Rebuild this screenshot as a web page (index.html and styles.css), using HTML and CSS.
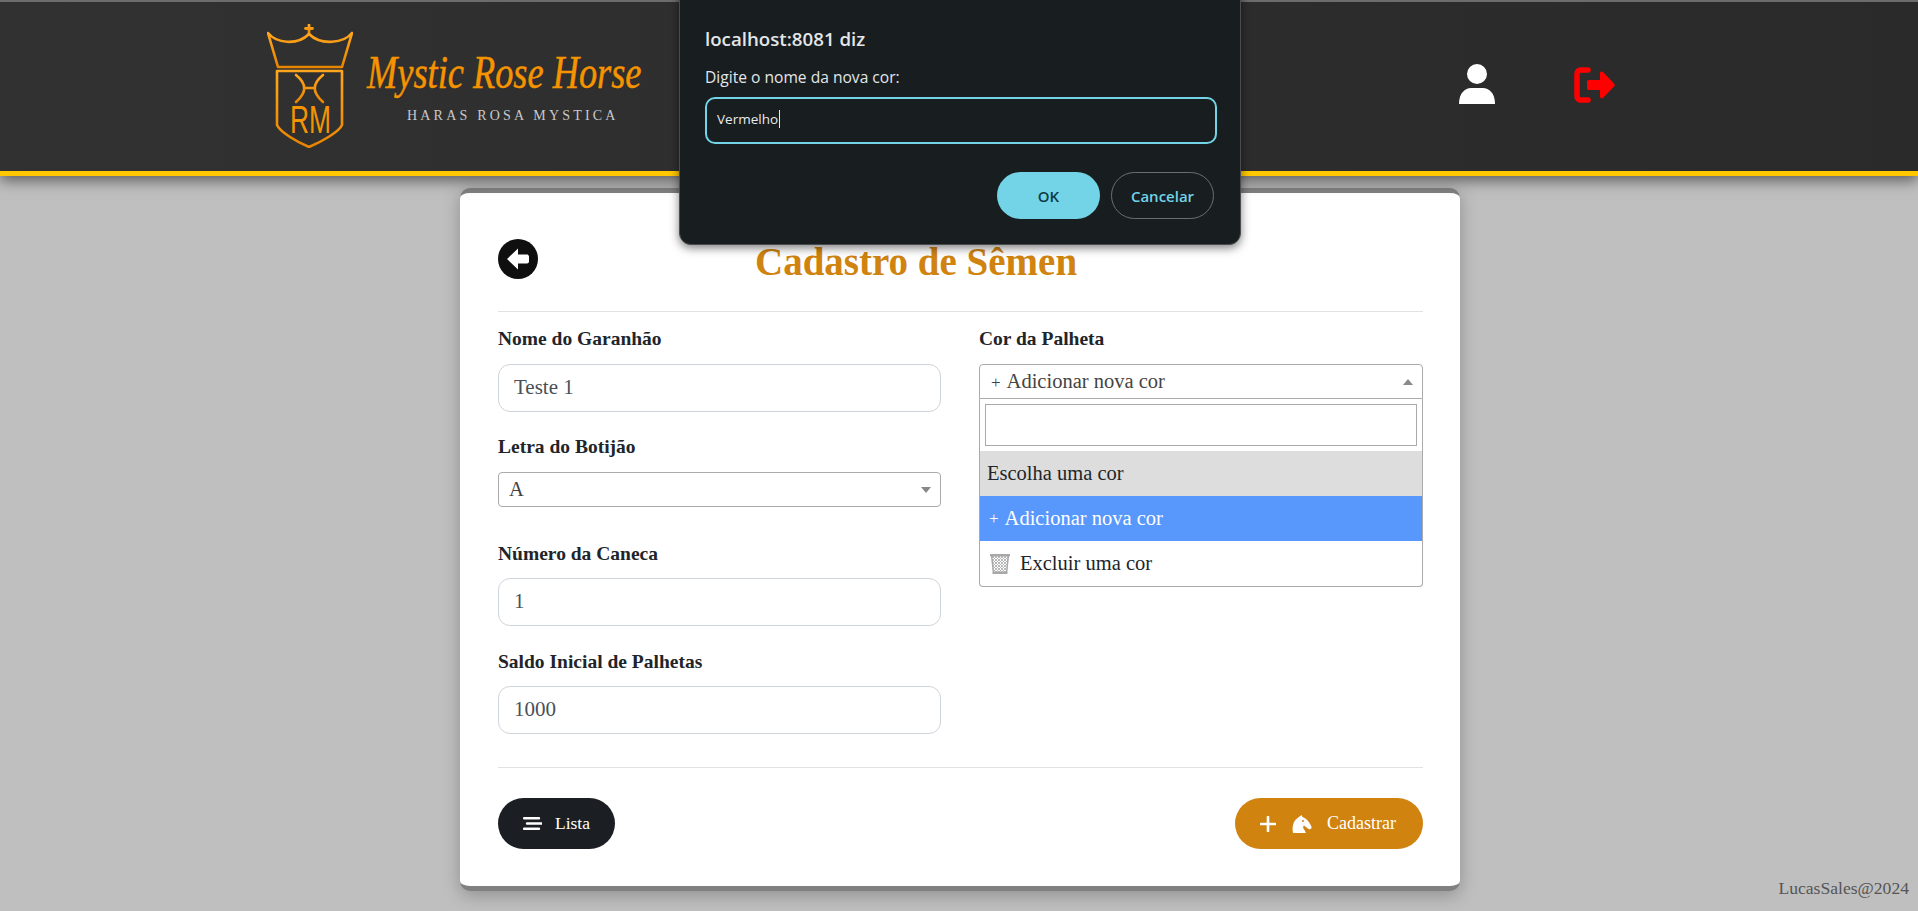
FILE: index.html
```html
<!DOCTYPE html>
<html lang="pt-BR">
<head>
<meta charset="utf-8">
<title>Cadastro de Sêmen</title>
<link rel="stylesheet" href="styles.css">
</head>
<body>
<header class="topbar">
  <div class="brand">
    <svg class="crest" viewBox="0 0 86 124" width="86" height="124" aria-hidden="true">
      <defs>
        <linearGradient id="gold" x1="0" y1="0" x2="0" y2="1">
          <stop offset="0" stop-color="#ffa51e"/><stop offset="1" stop-color="#e88500"/>
        </linearGradient>
      </defs>
      <g fill="none" stroke="url(#gold)" stroke-width="2.600" stroke-linecap="round" stroke-linejoin="round">
        <path d="M42 1V10M38.500 4.500H45.500" stroke-width="2.800"/>
        <path d="M1 9C9 19 30 22 42 10C54 22 77 19 85 9L75 43H11Z"/>
        <path d="M10 47H75V101C72 108 54 118 42 123C30 118 13 108 10 101Z"/>
        <path d="M29 51C40 60 40 68 29 78M56 51C45 60 45 68 56 78M37 64H48"/>
      </g>
      <text class="crest-rm" x="23" y="109" textLength="41" lengthAdjust="spacingAndGlyphs">RM</text>
    </svg>
    <div class="brand-text">
      <span class="brand-name">Mystic Rose Horse</span>
      <span class="brand-sub">HARAS ROSA MYSTICA</span>
    </div>
  </div>
  <nav class="top-actions">
    <svg class="user-icon" viewBox="0 0 36 40" width="36" height="40" aria-hidden="true">
      <circle cx="18" cy="10" r="10" fill="#fff"/>
      <path d="M0 40C0 29 6 24 12 24H24C30 24 36 29 36 40Z" fill="#fff"/>
    </svg>
    <svg class="exit-icon" viewBox="0 0 41 36" width="41" height="36" aria-hidden="true">
      <path d="M14 3H7C4.500 3 3 4.500 3 7V29C3 31.500 4.500 33 7 33H14" fill="none" stroke="#f00" stroke-width="5.500" stroke-linecap="round"/>
      <path d="M15 13H26V6C26 5 27.500 4 29 5L40 16.500C41 17.500 41 18.500 40 19.500L29 31C27.500 32 26 31 26 30V23H15C13.500 23 13 22 13 21V15C13 14 13.500 13 15 13Z" fill="#f00"/>
    </svg>
  </nav>
</header>

<main class="card">
  <div class="card-head">
    <button class="back" type="button" aria-label="Voltar">
      <svg viewBox="0 0 40 40" width="40" height="40" aria-hidden="true">
        <circle cx="20" cy="20" r="20" fill="#0f0f0f"/>
        <path d="M9 20L20 9.500V15.500H29C30 15.500 31 16.500 31 17.500V22.500C31 23.500 30 24.500 29 24.500H20V30.500Z" fill="#fff"/>
      </svg>
    </button>
    <h1 class="title">Cadastro de Sêmen</h1>
  </div>
  <div class="rule"></div>
  <form class="form-grid">
    <div class="col">
      <div class="field">
        <label class="label">Nome do Garanhão</label>
        <input class="input" type="text" value="Teste 1">
      </div>
      <div class="field field-select">
        <label class="label">Letra do Botijão</label>
        <div class="select">
          <span class="select-value">A</span>
          <span class="caret caret-down"></span>
        </div>
      </div>
      <div class="field field-low">
        <label class="label">Número da Caneca</label>
        <input class="input" type="text" value="1">
      </div>
      <div class="field field-low field-last">
        <label class="label">Saldo Inicial de Palhetas</label>
        <input class="input" type="text" value="1000">
      </div>
    </div>
    <div class="col">
      <div class="field">
        <label class="label">Cor da Palheta</label>
        <div class="combo">
          <div class="select select-open">
            <span class="select-value"><span class="plus plus-top">+</span>Adicionar nova cor</span>
            <span class="caret caret-up"></span>
          </div>
          <div class="search-wrap"><input class="search" type="text" aria-label="Buscar"></div>
          <ul class="options">
            <li class="option option-muted">Escolha uma cor</li>
            <li class="option option-active"><span class="plus">+</span>Adicionar nova cor</li>
            <li class="option">
              <svg class="trash" viewBox="0 0 20 20" width="20" height="20" aria-hidden="true">
                <defs>
                  <pattern id="mesh" width="3" height="3" patternUnits="userSpaceOnUse">
                    <path d="M0 0L3 3M3 0L0 3" stroke="#b0b0b0" stroke-width=".9"/>
                  </pattern>
                </defs>
                <path d="M1 1H19L17 19H3Z" fill="url(#mesh)"/>
                <path d="M0 0H20V2.500H0ZM1 2.500H2.500L4 18H2.700ZM17.500 2.500H19L17.300 18H16ZM2.500 17.500H17.500V20H2.500Z" fill="#a8a8a8"/>
              </svg>
              <span>Excluir uma cor</span>
            </li>
          </ul>
        </div>
      </div>
    </div>
  </form>
  <div class="rule"></div>
  <div class="actions">
    <button class="btn btn-dark" type="button">
      <svg viewBox="0 0 19 13" width="19" height="13" aria-hidden="true">
        <path d="M1 1.200H16M4 6.500H19M1 11.800H16" stroke="#fff" stroke-width="2.400" stroke-linecap="round"/>
      </svg>
      Lista
    </button>
    <button class="btn btn-orange" type="button">
      <svg viewBox="0 0 16 16" width="16" height="16" aria-hidden="true">
        <path d="M8 1V15M1 8H15" stroke="#fff" stroke-width="2.600" stroke-linecap="round"/>
      </svg>
      <svg class="horse" viewBox="0 0 20 18" width="20" height="18" aria-hidden="true">
        <path d="M1 18C0 12 1 6.500 5 3.500L9.500 0L10.500 2C14 3 17 6.500 19.500 11.500C20 13.500 18.500 15 16.500 14L12 10.500C10.500 11.500 11 13.500 12.500 15L14 18Z" fill="#fff"/>
        <circle cx="11" cy="6" r="1" fill="#d0840f"/>
      </svg>
      <span class="btn-text">Cadastrar</span>
    </button>
  </div>
</main>

<footer class="credit">LucasSales@2024</footer>

<div class="dialog" role="dialog">
  <div class="dialog-title">localhost:8081 diz</div>
  <div class="dialog-msg">Digite o nome da nova cor:</div>
  <div class="dialog-input">Vermelho<span class="cursor"></span></div>
  <div class="dialog-actions">
    <button class="dlg-btn dlg-ok" type="button">OK</button>
    <button class="dlg-btn dlg-cancel" type="button">Cancelar</button>
  </div>
</div>
</body>
</html>
```

FILE: styles.css
```css
* { box-sizing: border-box; }
html, body { margin: 0; height: 100%; }
body {
  background: #bfbfbf;
  font-family: "Liberation Serif", serif;
  color: #212529;
  overflow: hidden;
  position: relative;
}

/* header */
.topbar {
  height: 176px;
  border-top: 2px solid #6c6c6c;
  border-bottom: 5px solid #ffc800;
  background: linear-gradient(90deg, #313131, #2a2a2a);
  box-shadow: 0 4px 14px rgba(0, 0, 0, .55);
  display: flex;
  align-items: flex-start;
  position: relative;
  padding-left: 267px;
}
.brand { display: flex; padding-top: 22px; }
.crest { display: block; }
.crest-rm { font: 38px "Liberation Sans", sans-serif; fill: #f59400; }
.brand-text { display: flex; flex-direction: column; margin-left: 14px; padding-top: 22px; }
.brand-name {
  font: italic 46px/54px "Liberation Serif", serif;
  color: #f59400;
  -webkit-text-stroke: .5px #f59400;
  white-space: nowrap;
  width: 276px;
  transform: scaleX(.79);
  transform-origin: left center;
}
.brand-sub {
  font-size: 14px;
  line-height: 16px;
  color: #c9c9c9;
  letter-spacing: 3.200px;
  margin: 8px 0 0 40px;
  white-space: nowrap;
}
.top-actions { display: flex; align-items: flex-start; margin-left: 816px; padding-top: 62px; }
.exit-icon { margin-left: 79px; margin-top: 3px; }

/* card */
.card {
  width: 1000px;
  height: 703px;
  margin: 12px 0 0 460px;
  background: #fff;
  border-top: 5px solid #808080;
  border-bottom: 5px solid #808080;
  border-radius: 10px;
  padding: 46px 37px 0 38px;
  box-shadow: 0 4px 18px rgba(0, 0, 0, .25);
}
.card-head { display: flex; height: 40px; margin-bottom: 32px; }
.back { border: 0; background: none; padding: 0; height: 40px; width: 40px; }
.title {
  margin: 0 0 0 217px;
  font-size: 39px;
  line-height: 46px;
  font-weight: 700;
  color: #d0840f;
  white-space: nowrap;
}
.rule { height: 1px; background: #e2e2e2; }

/* form */
.form-grid {
  display: grid;
  grid-template-columns: 443px 444px;
  column-gap: 38px;
  padding-top: 15px;
  height: 455px;
}
.field { margin-bottom: 23px; }
.field-select { margin-bottom: 34px; }
.field-last { margin-bottom: 0; }
.label {
  display: block;
  font-size: 19.500px;
  line-height: 24px;
  font-weight: 700;
  color: #212529;
  margin-bottom: 13px;
}
.field-low .label { padding-top: 1px; line-height: 23px; }
.input {
  display: block;
  width: 100%;
  height: 48px;
  border: 1px solid #ced4da;
  border-radius: 12px;
  padding: 0 15px 2px;
  background: #fff;
  font: 21px "Liberation Serif", serif;
  color: #495057;
}
.select {
  height: 35px;
  border: 1px solid #aaa;
  border-radius: 4px;
  display: flex;
  align-items: center;
  justify-content: space-between;
  padding: 0 9px 0 10px;
  background: #fff;
}
.select-value { font-size: 20.500px; color: #444; white-space: nowrap; }
.caret { width: 0; height: 0; border-left: 5px solid transparent; border-right: 5px solid transparent; }
.caret-down { border-top: 6px solid #888; }
.caret-up { border-bottom: 6px solid #888; }
.select-open { border-radius: 4px 4px 0 0; }
.search-wrap {
  border-left: 1px solid #aaa;
  border-right: 1px solid #aaa;
  padding: 5px;
  background: #fff;
}
.search { display: block; width: 100%; height: 42px; border: 1px solid #aaa; background: #fff; }
.options {
  list-style: none;
  margin: 0;
  padding: 0;
  border: 1px solid #aaa;
  border-top: 0;
  border-radius: 0 0 4px 4px;
  background: #fff;
  overflow: hidden;
}
.option {
  height: 45px;
  padding: 0 7px;
  display: flex;
  align-items: center;
  font-size: 20.500px;
  color: #212529;
  white-space: nowrap;
}
.option-muted { background: #ddd; }
.option-active { background: #5897fb; color: #fff; }
.plus { font-size: 17px; margin: 0 6px 0 2px; }
.plus-top { margin: 0 6px 0 1px; }
.trash { margin: 0 10px 0 3px; flex: none; }

/* buttons */
.actions { display: flex; justify-content: space-between; padding-top: 30px; }
.btn {
  height: 51px;
  border: 0;
  border-radius: 26px;
  color: #fff;
  font: 17.500px "Liberation Serif", serif;
  display: flex;
  align-items: center;
}
.btn-dark { width: 117px; background: #1b1f23; padding: 0 0 0 25px; gap: 13px; }
.btn-orange { width: 188px; background: #d0840f; padding: 0 0 0 25px; }
.horse { margin-left: 16px; }
.btn-text { margin-left: 15px; font-size: 18px; }

/* footer */
.credit {
  position: absolute;
  right: 9px;
  bottom: 12px;
  font-size: 17.600px;
  color: #555;
}

/* native prompt */
.dialog {
  position: absolute;
  left: 679px;
  top: -20px;
  width: 562px;
  height: 265px;
  background: #181d20;
  border: 1px solid #4a4d4f;
  border-radius: 12px;
  box-shadow: 0 3px 10px rgba(0, 0, 0, .5);
  font-family: "Open Sans", sans-serif;
  color: #e3e6e8;
  padding: 0 25px;
}
.dialog-title { position: absolute; top: 45px; font-size: 18.700px; line-height: 26px; font-weight: 600; }
.dialog-msg { position: absolute; top: 85px; font-size: 15.600px; line-height: 22px; }
.dialog-input {
  position: absolute;
  top: 116px;
  left: 25px;
  width: 512px;
  height: 47px;
  border: 2px solid #72d4e6;
  border-radius: 10px;
  padding: 0 10px 4px;
  display: flex;
  align-items: center;
  font-size: 13.500px;
  color: #e8eaed;
}
.cursor { width: 1px; height: 18px; background: #e8eaed; margin-left: 1px; }
.dialog-actions { position: absolute; top: 191px; right: 26px; display: flex; gap: 11px; }
.dlg-btn {
  width: 103px;
  height: 47px;
  border-radius: 24px;
  font: 600 15px "Open Sans", sans-serif;
}
.dlg-ok { background: #72d4e6; border: 0; color: #0e3a45; }
.dlg-cancel { background: transparent; border: 1px solid #667074; color: #72d4e6; }
```
